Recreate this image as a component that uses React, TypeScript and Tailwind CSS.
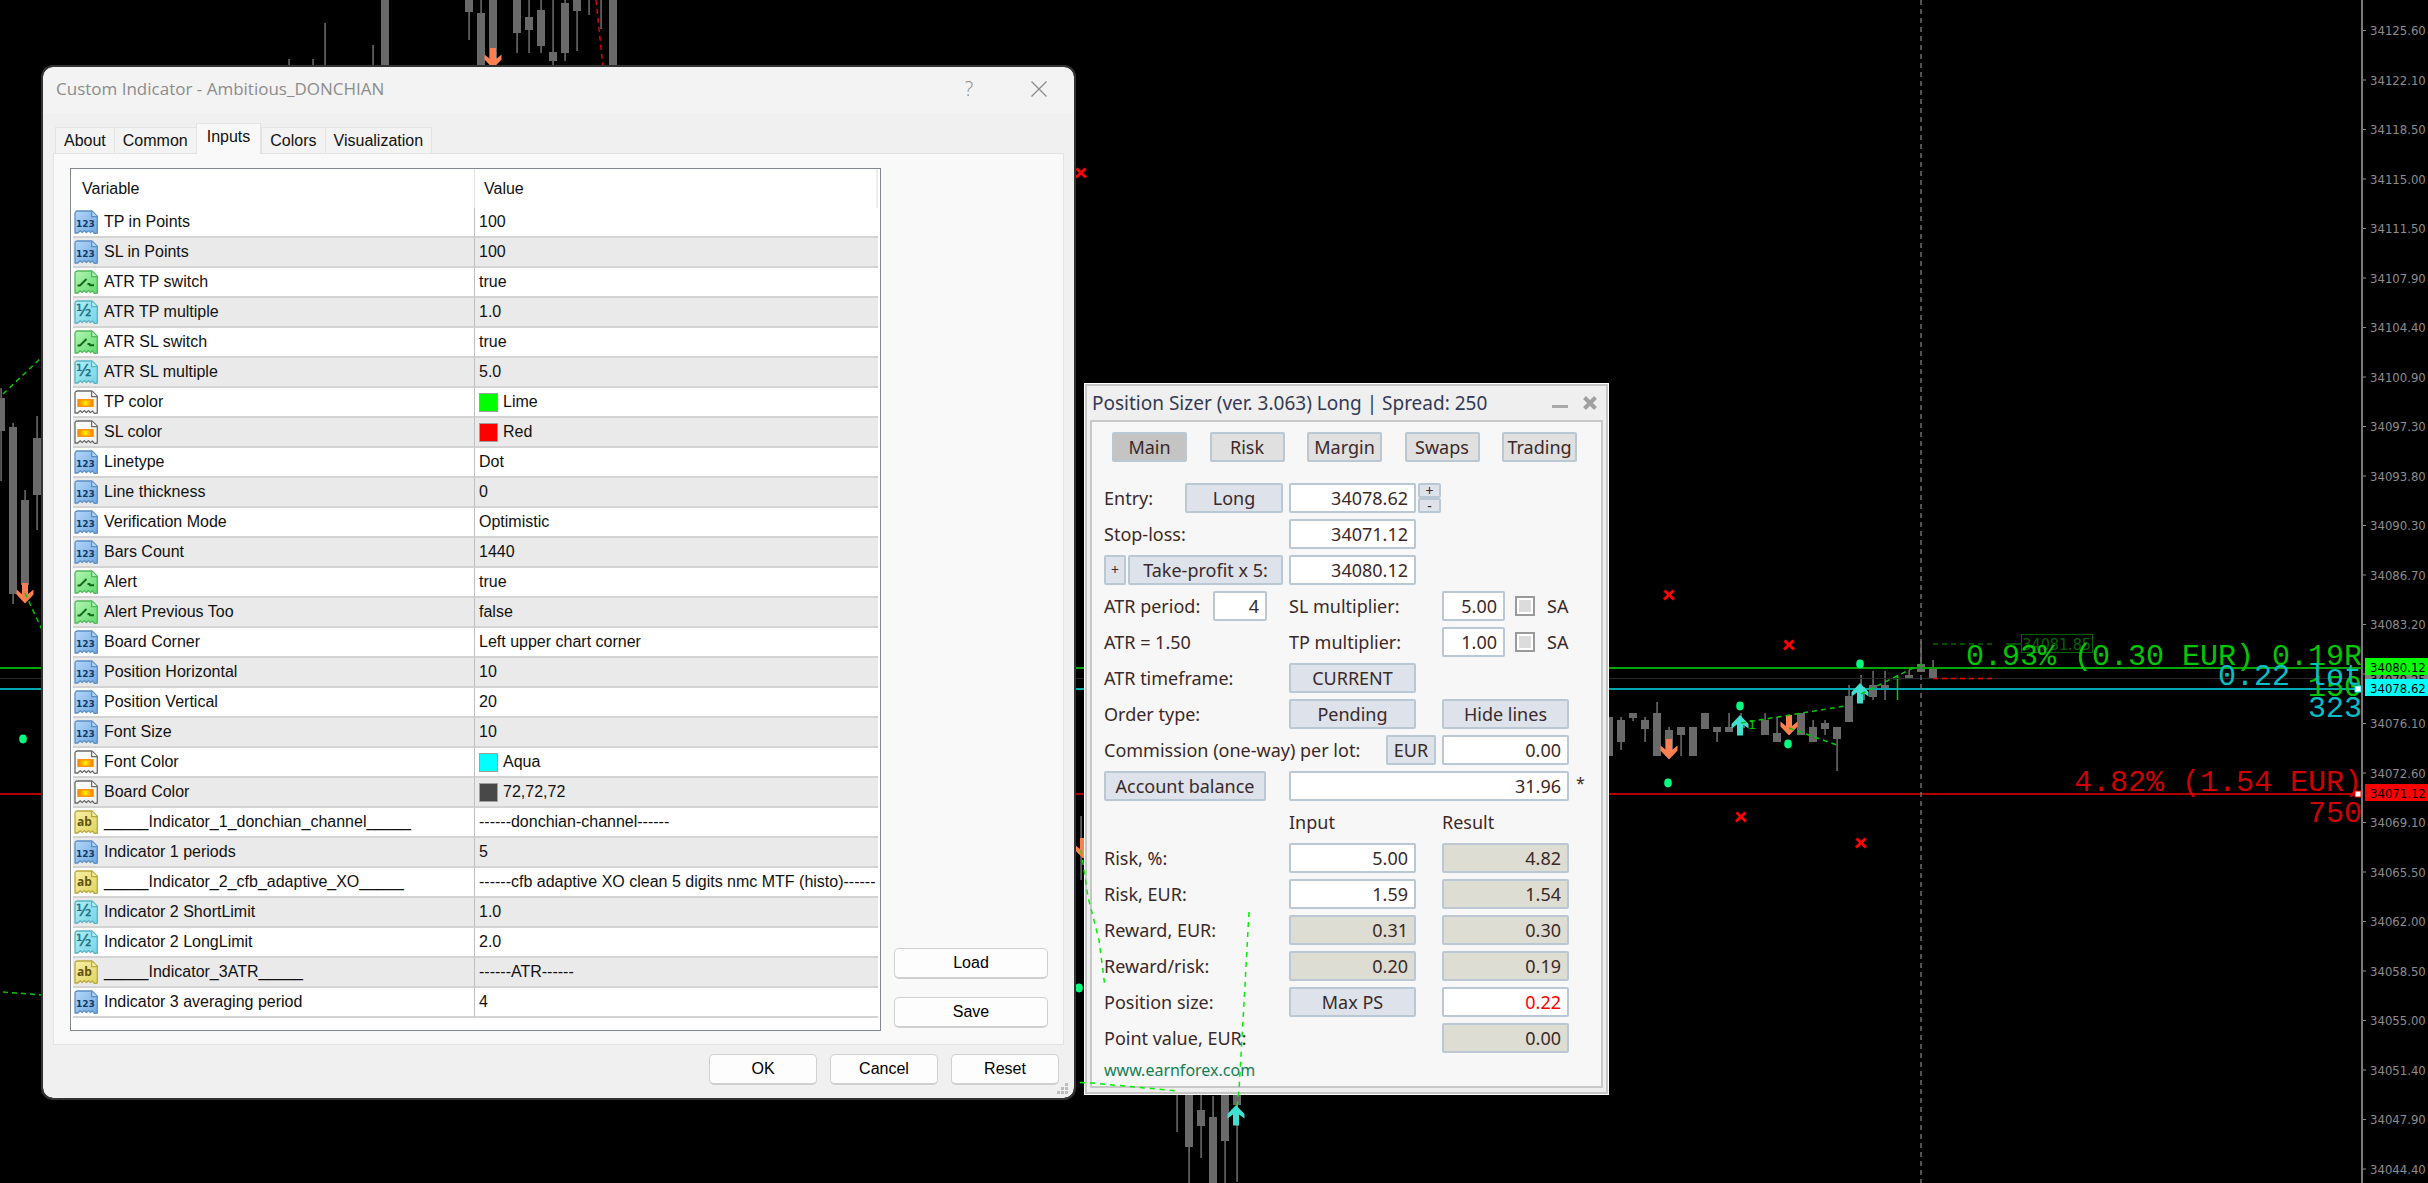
import React from "react";

type Kind = "int" | "bool" | "real" | "color" | "string";

interface Variable {
  name: string;
  value: string;
  kind: Kind;
  swatch?: string;
}

const variables: Variable[] = [
  { name: "TP in Points", value: "100", kind: "int" },
  { name: "SL in Points", value: "100", kind: "int" },
  { name: "ATR TP switch", value: "true", kind: "bool" },
  { name: "ATR TP multiple", value: "1.0", kind: "real" },
  { name: "ATR SL switch", value: "true", kind: "bool" },
  { name: "ATR SL multiple", value: "5.0", kind: "real" },
  { name: "TP color", value: "Lime", kind: "color", swatch: "bg-[#00ff00]" },
  { name: "SL color", value: "Red", kind: "color", swatch: "bg-[#ff0000]" },
  { name: "Linetype", value: "Dot", kind: "int" },
  { name: "Line thickness", value: "0", kind: "int" },
  { name: "Verification Mode", value: "Optimistic", kind: "int" },
  { name: "Bars Count", value: "1440", kind: "int" },
  { name: "Alert", value: "true", kind: "bool" },
  { name: "Alert Previous Too", value: "false", kind: "bool" },
  { name: "Board Corner", value: "Left upper chart corner", kind: "int" },
  { name: "Position Horizontal", value: "10", kind: "int" },
  { name: "Position Vertical", value: "20", kind: "int" },
  { name: "Font Size", value: "10", kind: "int" },
  { name: "Font Color", value: "Aqua", kind: "color", swatch: "bg-[#00ffff]" },
  { name: "Board Color", value: "72,72,72", kind: "color", swatch: "bg-[#484848]" },
  { name: "_____Indicator_1_donchian_channel_____", value: "------donchian-channel------", kind: "string" },
  { name: "Indicator 1 periods", value: "5", kind: "int" },
  { name: "_____Indicator_2_cfb_adaptive_XO_____", value: "------cfb adaptive XO clean 5 digits nmc MTF (histo)------", kind: "string" },
  { name: "Indicator 2 ShortLimit", value: "1.0", kind: "real" },
  { name: "Indicator 2 LongLimit", value: "2.0", kind: "real" },
  { name: "_____Indicator_3ATR_____", value: "------ATR------", kind: "string" },
  { name: "Indicator 3 averaging period", value: "4", kind: "int" },
];

// fill top, fill bottom, outline, ink
const iconColors: Record<Kind, [string, string, string, string]> = {
  int: ["#b4d6fa", "#6fa8e0", "#5b8fc4", "#123a66"],
  bool: ["#b2f7b4", "#62d86c", "#4fb85a", "#14641c"],
  real: ["#b4f0f8", "#74d3e4", "#57b3c4", "#1c6f80"],
  color: ["#ffffff", "#f1f1f1", "#6a6a6a", "#ff8a00"],
  string: ["#f7f0a8", "#e2d35c", "#b8a83c", "#5e5410"],
};

const TypeIcon: React.FC<{ kind: Kind }> = ({ kind }) => {
  const [top, bottom, line, ink] = iconColors[kind];
  return (
    <svg width="24" height="24" viewBox="0 0 24 24" className="shrink-0" aria-hidden="true">
      <defs>
        <linearGradient id={`fill-${kind}`} x1="0" y1="0" x2="1" y2="1">
          <stop offset="0" stopColor={top} />
          <stop offset="1" stopColor={bottom} />
        </linearGradient>
        <linearGradient id="chip">
          <stop offset="0" stopColor="#ff7a00" />
          <stop offset="0.5" stopColor="#ffee00" />
          <stop offset="1" stopColor="#ff7a00" />
        </linearGradient>
      </defs>
      <path
        d="M1 23V3.5Q1 1 3.5 1H18L23.3 6.3V23L20.6 23.6L18.4 21L16.4 22.6L14.6 20.6L12.4 22.6L10.2 20.6L8.2 22.6L6.2 20.8L3.8 23Z"
        fill={`url(#fill-${kind})`}
        stroke={line}
        strokeWidth="1.3"
        strokeLinejoin="round"
      />
      <path d="M17.6 1.2V6.6H23" fill={top} stroke={line} strokeWidth="1.3" />
      {kind === "int" && (
        <text x="11.4" y="16.6" textAnchor="middle" fontSize="9" fontWeight="700" fontFamily="DejaVu Sans, sans-serif" fill={ink}>123</text>
      )}
      {kind === "real" && (
        <text x="9.8" y="15.8" textAnchor="middle" fontSize="16" fontFamily="DejaVu Sans, sans-serif" fill={ink} stroke={ink} strokeWidth="0.4">½</text>
      )}
      {kind === "string" && (
        <text x="10.4" y="16.4" textAnchor="middle" fontSize="12" fontWeight="700" fontFamily="Open Sans, sans-serif" fill={ink}>ab</text>
      )}
      {kind === "bool" && <path d="M3.5 15.5H6L12.5 9M13.5 14H15.5L16 15.3H20" fill="none" stroke={ink} strokeWidth="1.9" />}
      {kind === "color" && <rect x="4" y="9.8" width="15" height="6.4" fill="url(#chip)" stroke={ink} strokeWidth="1.4" />}
    </svg>
  );
};

// [center x, wick top, wick bottom, body top, body bottom]
const candles: number[][] = [
  [1, 388, 481, 398, 431], [13, 423, 604, 427, 594], [25, 490, 585, 500, 585], [37, 416, 530, 438, 495],
  [289, 59, 70, 0, 0], [313, 59, 70, 0, 0], [325, 23, 70, 0, 0], [373, 45, 70, 65, 70], [385, 0, 70, 0, 70],
  [469, 0, 40, 0, 12], [481, 0, 70, 13, 70], [493, 0, 60, 0, 60], [517, 0, 53, 0, 33], [529, 0, 53, 17, 30],
  [541, 0, 53, 10, 46], [553, 0, 70, 52, 61], [565, 0, 61, 3, 53], [577, 0, 51, 0, 11], [589, 0, 15, 0, 0],
  [601, 0, 29, 0, 0], [613, 0, 70, 0, 70],
  [1081, 816, 880, 0, 0], [1177, 1090, 1132, 0, 0], [1189, 1090, 1183, 1090, 1147], [1201, 1090, 1158, 1110, 1126],
  [1213, 1096, 1183, 1117, 1183], [1225, 1090, 1183, 1090, 1141], [1237, 1090, 1182, 1090, 1105],
  [1609, 717, 756, 717, 756], [1621, 717, 750, 720, 742], [1633, 713, 721, 713, 718], [1645, 717, 742, 720, 729],
  [1657, 702, 756, 713, 756], [1669, 727, 750, 730, 756], [1681, 727, 756, 727, 735], [1693, 727, 756, 727, 756],
  [1705, 713, 729, 713, 729], [1717, 727, 742, 727, 732], [1729, 713, 732, 727, 732], [1741, 713, 728, 720, 728],
  [1765, 713, 735, 720, 735], [1777, 717, 742, 733, 742], [1801, 713, 735, 713, 735], [1813, 720, 742, 727, 742],
  [1825, 720, 735, 723, 729], [1837, 727, 771, 727, 739], [1849, 685, 722, 696, 722], [1861, 675, 700, 687, 700],
  [1873, 671, 700, 685, 697], [1885, 671, 700, 685, 689], [1909, 670, 679, 675, 679], [1921, 641, 672, 664, 672],
  [1933, 660, 679, 668, 679],
];

const crosses = [[1081, 173], [1669, 595], [1789, 645], [1741, 817], [1861, 843], [60, 1095]];
const dots = [[1860, 664], [1740, 706], [1788, 744], [1668, 783], [23, 739], [1079, 988]];
const upArrows = [[1740, 715], [1860, 683]];
const downArrows = [[1669, 739], [1789, 715], [25, 583], [493, 48], [1083, 838]];

const prices = [
  "34125.60", "34122.10", "34118.50", "34115.00", "34111.50", "34107.90", "34104.40", "34100.90",
  "34097.30", "34093.80", "34090.30", "34086.70", "34083.20", "34079.70", "34076.10", "34072.60",
  "34069.10", "34065.50", "34062.00", "34058.50", "34055.00", "34051.40", "34047.90", "34044.40",
];

const UpArrow: React.FC<{ x: number; y: number }> = ({ x, y }) => (
  <path transform={`translate(${x} ${y})`} d="M0 0L8.5 9V13.5L3 9.5V20.5H-3V9.5L-8.5 13.5V9Z" fill="#40e0d0" />
);

const DownArrow: React.FC<{ x: number; y: number }> = ({ x, y }) => (
  <path transform={`translate(${x} ${y})`} d="M0 20.5L8.5 11.5V6.5L3 11V0H-3V11L-8.5 6.5V11.5Z" fill="#ff7f50" />
);

const Chart: React.FC = () => (
  <svg className="absolute inset-0 h-full w-full" aria-label="Price chart">
    {/* Candles */}
    {candles.map(([x, wt, wb, bt, bb]) => (
      <g key={`${x}-${wt}`} fill="#696969">
        <rect x={x - 0.7} y={wt} width="1.6" height={wb - wt} />
        <rect x={x - 4} y={bt} width="8" height={bb - bt} />
      </g>
    ))}
    <path d="M1897.5 675V700M1893 678.5H1901" stroke="#00d000" strokeWidth="1.5" />

    {/* Price levels */}
    <line x1="0" x2="2362" y1="678.5" y2="678.5" stroke="#2a2a2a" />
    <line x1="0" x2="2362" y1="668" y2="668" stroke="#00a800" strokeWidth="2" />
    <line x1="0" x2="2362" y1="689" y2="689" stroke="#00a8b0" strokeWidth="2" />
    <line x1="0" x2="2362" y1="794" y2="794" stroke="#b00000" strokeWidth="2" />
    <line x1="1921" x2="1921" y1="0" y2="100%" stroke="#6e6e6e" strokeWidth="1.5" strokeDasharray="5 4" />

    {/* Trade marks */}
    {upArrows.map(([x, y]) => <UpArrow key={x} x={x} y={y} />)}
    {downArrows.map(([x, y]) => <DownArrow key={x} x={x} y={y} />)}
    {dots.map(([x, y]) => <ellipse key={x} cx={x} cy={y} rx="3.8" ry="4.4" fill="#00ff7f" />)}
    {crosses.map(([x, y]) => (
      <path key={x} transform={`translate(${x} ${y})`} d="M-4.5 -4.5L5 4.5M4.5 -4.5L-5 4.5" stroke="#ff0000" strokeWidth="3" />
    ))}
    <g fill="none" stroke="#00c800" strokeWidth="1.5" strokeDasharray="5 4">
      <path d="M3 394L43 356M25 593L43 632M3 992L43 995" />
      <path d="M1741 723L1845 706M1789 728L1837 745M1861 694L1921 664" />
      <path d="M596 0L603 67" stroke="#e00000" />
      <path d="M1933 678.5H1992" stroke="#ff0000" />
      <path d="M1933 644H1992" stroke="#006400" />
      <path d="M2006 644H2021" stroke="#006400" strokeDasharray="none" />
    </g>
    <text x="1748" y="729" fontSize="13" fontFamily="DejaVu Sans, sans-serif" fill="#00c800">1</text>

    {/* Level labels */}
    <g fontFamily="Liberation Mono, monospace" fontSize="30" textAnchor="end">
      <rect x="2021.5" y="634.5" width="71" height="18" fill="none" stroke="#006400" />
      <text x="2091" y="650" fontSize="16" fontFamily="DejaVu Sans Condensed, sans-serif" fill="#006400">34081.85</text>
      <text x="2362" y="665" fill="#00c800">0.93% (0.30 EUR) 0.19R</text>
      <text x="2362" y="696" fill="#00c800">150</text>
      <text x="2362" y="685" fill="#00c0c8">0.22 lot</text>
      <text x="2362" y="717" fill="#00c0c8">323</text>
      <text x="2362" y="791" fill="#d00000">4.82% (1.54 EUR)</text>
      <text x="2362" y="822" fill="#d00000">750</text>
    </g>
    <rect x="2355" y="686" width="6" height="6" fill="#fff" stroke="#00ffff" />
    <rect x="2355" y="791" width="6" height="6" fill="#fff" stroke="#ff0000" />

    {/* Price scale */}
    <rect x="2361" width="2" height="100%" fill="#787878" />
    <g fontFamily="DejaVu Sans Condensed, sans-serif" fontSize="13" fill="#8c8c8c">
      {prices.map((p, i) => (
        <g key={p} transform={`translate(2363 ${30 + i * 49.5})`}>
          <rect width="3" height="1" />
          <text x="7" y="5">{p}</text>
        </g>
      ))}
      <rect x="2365" y="672" width="63" height="17" fill="#808080" />
      <text x="2370" y="684" fill="#000">34079.25</text>
      <rect x="2365" y="658" width="63" height="17" fill="#00ff00" />
      <text x="2370" y="672" fill="#000">34080.12</text>
      <rect x="2365" y="679" width="63" height="17" fill="#00ffff" />
      <text x="2370" y="693" fill="#000">34078.62</text>
      <rect x="2365" y="784" width="63" height="17" fill="#ff0000" />
      <text x="2370" y="798" fill="#000">34071.12</text>
    </g>
  </svg>
);

const tabs = ["About", "Common", "Inputs", "Colors", "Visualization"];

const WinButton: React.FC<{ className: string; children: React.ReactNode }> = ({ className, children }) => (
  <button type="button" className={`h-[31px] rounded-[5px] border border-b-2 border-[#d0d0d0] bg-[#fdfdfd] text-black ${className}`}>
    {children}
  </button>
);

const IndicatorDialog: React.FC = () => (
  <section
    aria-label="Custom Indicator"
    className="absolute top-[67px] left-[43px] w-[1031px] overflow-hidden rounded-[10px] bg-[#f0f0f0] font-['Liberation_Sans',sans-serif] text-base leading-5 text-[#111] outline-2 outline-[#333]"
  >
    <header className="flex h-[46px] items-center bg-[#f3f3f3] pr-[27px] pb-[2px] pl-[13px] text-[#8c8c8c]">
      <h1 className="flex-1 font-['Open_Sans',sans-serif] text-[17px]">Custom Indicator - Ambitious_DONCHIAN</h1>
      <button type="button" aria-label="Help" className="mr-[52px] w-5 font-['Open_Sans',sans-serif] text-xl font-light">?</button>
      <button type="button" aria-label="Close" className="w-4">
        <svg width="16" height="16" viewBox="0 0 16 16" stroke="#8c8c8c" strokeWidth="1.3">
          <path d="M0.5 0.5L15.5 15.5M15.5 0.5L0.5 15.5" />
        </svg>
      </button>
    </header>

    {/* Tabs */}
    <nav className="flex h-10 items-end pl-3">
      {tabs.map((tab) => (
        <button
          key={tab}
          type="button"
          className={
            tab === "Inputs"
              ? "relative -mb-px h-[31px] border border-b-0 border-[#e3e3e3] bg-[#f9f9f9] px-[10px] pb-1"
              : "h-[26px] border border-r-0 border-b-0 border-[#e3e3e3] bg-[#f3f3f3] px-2 last:border-r"
          }
        >
          {tab}
        </button>
      ))}
    </nav>

    <div className="mx-[10px] flex gap-[13px] border border-[#e3e3e3] bg-[#f9f9f9] pt-[14px] pr-[15px] pb-[13px] pl-4">
      <div className="flex-1 border border-[#828790] bg-white px-[2px] pb-3">
        <table className="w-full border-separate border-spacing-0">
          <thead>
            <tr className="h-[39px] text-left">
              <th className="w-[402px] border-r border-[#e3e3e3] pt-0 pl-[9px] font-normal">Variable</th>
              <th className="border-r-2 border-[#eeeeee] pt-0 pl-[9px] font-normal">Value</th>
            </tr>
          </thead>
          <tbody>
            {variables.map((v) => (
              <tr key={v.name} className="h-[30px] even:bg-[#eaeaea]">
                <td className="border-r border-b-2 border-r-[#c0c0c0] border-b-[#d3d3d3] p-0">
                  <div className="flex items-center gap-[6px] pl-px">
                    <TypeIcon kind={v.kind} />
                    {v.name}
                  </div>
                </td>
                <td className="border-b-2 border-[#d3d3d3] p-0">
                  <div className="flex items-center gap-[5px] pl-1 whitespace-nowrap">
                    {v.swatch && <span className={`size-[19px] border border-[#a0a0a0] ${v.swatch}`} />}
                    {v.value}
                  </div>
                </td>
              </tr>
            ))}
          </tbody>
        </table>
      </div>
      <div className="flex w-[154px] flex-col justify-end gap-[18px] pb-[3px]">
        <WinButton className="w-full">Load</WinButton>
        <WinButton className="w-full">Save</WinButton>
      </div>
    </div>

    <footer className="flex justify-end gap-[13px] pt-[9px] pr-[15px] pb-[13px]">
      <WinButton className="w-[108px]">OK</WinButton>
      <WinButton className="w-[108px]">Cancel</WinButton>
      <WinButton className="w-[108px]">Reset</WinButton>
    </footer>
    <svg className="absolute right-[5px] bottom-[3px]" width="12" height="12" fill="#bdbdbd" aria-hidden="true">
      <path d="M8 0h3v3h-3zM8 4h3v3h-3zM4 4h3v3h-3zM8 8h3v3h-3zM4 8h3v3h-3zM0 8h3v3h-3z" />
    </svg>
  </section>
);

const Btn: React.FC<{ className: string; children: React.ReactNode }> = ({ className, children }) => (
  <button type="button" className={`rounded-[2px] border-2 border-[#b9c8d3] bg-[#dde2eb] text-center whitespace-nowrap ${className}`}>
    {children}
  </button>
);

interface FieldProps {
  id: string;
  value: string;
  label?: string;
  className?: string;
  readOnly?: boolean;
}

const Field: React.FC<FieldProps> = ({ id, value, label, className = "w-[127px]", readOnly }) => (
  <input
    id={id}
    aria-label={label}
    defaultValue={value}
    readOnly={readOnly}
    className={`h-[30px] rounded-[2px] border-2 border-[#b9c8d3] px-[6px] text-right ${readOnly ? "bg-[#ddddd3]" : "bg-white"} ${className}`}
  />
);

const Row: React.FC<{ children: React.ReactNode }> = ({ children }) => (
  <div className="grid h-[30px] grid-cols-[185px_153px_1fr] items-center">{children}</div>
);

const PositionSizer: React.FC = () => (
  <section
    aria-label="Position Sizer"
    className="absolute top-[383px] left-[1084px] w-[525px] border border-white bg-[#c6c6c6] p-[2px] font-['Noto_Sans',sans-serif] text-lg leading-6 text-[#3b2928]"
  >
    <div className="bg-[#efefef] px-[3px] pb-1">
      <header className="flex h-[34px] items-center pr-[6px] pl-[2px] text-[#333a55]">
        <h2 className="flex-1 text-[19px]">Position Sizer (ver. 3.063) Long | Spread: 250</h2>
        <button type="button" aria-label="Minimize" className="mr-[15px]">
          <svg width="16" height="14" fill="#a9a9a9"><rect y="9" width="16" height="3" /></svg>
        </button>
        <button type="button" aria-label="Close">
          <svg width="14" height="14" stroke="#a0a0a0" strokeWidth="4"><path d="M1.5 1.5L12.5 12.5M12.5 1.5L1.5 12.5" /></svg>
        </button>
      </header>

      <div className="border-2 border-[#c8c8c8] bg-[#f7f7f7] px-3 pt-[10px] pb-1">
        <nav className="mr-3 mb-[21px] ml-2 flex justify-between">
          {["Main", "Risk", "Margin", "Swaps", "Trading"].map((tab) => (
            <button
              key={tab}
              type="button"
              className={`h-[30px] w-[75px] rounded-[2px] border-2 border-[#b9c8d3] ${tab === "Main" ? "bg-[#c4c4c4]" : "bg-[#e0e0e0]"}`}
            >
              {tab}
            </button>
          ))}
        </nav>

        <div className="flex flex-col gap-[6px]">
          <Row>
            <div className="flex items-center justify-between pr-[6px]">
              <label htmlFor="entry">Entry:</label>
              <Btn className="h-[30px] w-[98px]">Long</Btn>
            </div>
            <div className="flex gap-[2px]">
              <Field id="entry" value="34078.62" />
              <div className="flex flex-col text-sm leading-[11px]">
                <Btn className="h-[15px] w-[23px]">+</Btn>
                <Btn className="h-[15px] w-[23px]">-</Btn>
              </div>
            </div>
          </Row>
          <Row>
            <label htmlFor="stop">Stop-loss:</label>
            <Field id="stop" value="34071.12" />
          </Row>
          <Row>
            <div className="flex gap-[2px]">
              <Btn className="h-[30px] w-[22px] text-sm">+</Btn>
              <Btn className="h-[30px] w-[155px]">Take-profit x 5:</Btn>
            </div>
            <Field id="take" label="Take-profit" value="34080.12" />
          </Row>
          <Row>
            <div className="flex items-center justify-between pr-[22px] whitespace-nowrap">
              <label htmlFor="atr">ATR period:</label>
              <Field id="atr" value="4" className="w-[54px]" />
            </div>
            <label htmlFor="slm">SL multiplier:</label>
            <div className="flex items-center">
              <Field id="slm" value="5.00" className="w-[63px]" />
              <input id="sa1" type="checkbox" className="mr-3 ml-[10px] size-5 appearance-none border-2 border-[#9a9a9a] bg-[#dcdcdc] shadow-[inset_0_0_0_2px_#fff]" />
              <label htmlFor="sa1">SA</label>
            </div>
          </Row>
          <Row>
            <span>ATR = 1.50</span>
            <label htmlFor="tpm">TP multiplier:</label>
            <div className="flex items-center">
              <Field id="tpm" value="1.00" className="w-[63px]" />
              <input id="sa2" type="checkbox" className="mr-3 ml-[10px] size-5 appearance-none border-2 border-[#9a9a9a] bg-[#dcdcdc] shadow-[inset_0_0_0_2px_#fff]" />
              <label htmlFor="sa2">SA</label>
            </div>
          </Row>
          <Row>
            <span>ATR timeframe:</span>
            <Btn className="h-[30px] w-[127px]">CURRENT</Btn>
          </Row>
          <Row>
            <span>Order type:</span>
            <Btn className="h-[30px] w-[127px]">Pending</Btn>
            <Btn className="h-[30px] w-[127px]">Hide lines</Btn>
          </Row>
          <Row>
            <div className="col-span-2 flex items-center justify-between pr-[6px]">
              <label htmlFor="commission">Commission (one-way) per lot:</label>
              <Btn className="h-[30px] w-[50px]">EUR</Btn>
            </div>
            <Field id="commission" value="0.00" />
          </Row>
          <Row>
            <Btn className="h-[30px] w-[162px]">Account balance</Btn>
            <div className="col-span-2 flex gap-[7px]">
              <Field id="balance" label="Account balance" value="31.96" className="w-[280px]" />
              <span className="text-base">*</span>
            </div>
          </Row>
          <Row>
            <span />
            <span>Input</span>
            <span>Result</span>
          </Row>
          <Row>
            <label htmlFor="risk">Risk, %:</label>
            <Field id="risk" value="5.00" />
            <Field id="risk-result" label="Risk, % result" value="4.82" readOnly />
          </Row>
          <Row>
            <label htmlFor="risk-eur">Risk, EUR:</label>
            <Field id="risk-eur" value="1.59" />
            <Field id="risk-eur-result" label="Risk, EUR result" value="1.54" readOnly />
          </Row>
          <Row>
            <label htmlFor="reward">Reward, EUR:</label>
            <Field id="reward" value="0.31" readOnly />
            <Field id="reward-result" label="Reward, EUR result" value="0.30" readOnly />
          </Row>
          <Row>
            <label htmlFor="ratio">Reward/risk:</label>
            <Field id="ratio" value="0.20" readOnly />
            <Field id="ratio-result" label="Reward/risk result" value="0.19" readOnly />
          </Row>
          <Row>
            <label htmlFor="size">Position size:</label>
            <Btn className="h-[30px] w-[127px]">Max PS</Btn>
            <Field id="size" value="0.22" className="w-[127px] text-[#ff0000]" />
          </Row>
          <Row>
            <label htmlFor="point" className="col-span-2">Point value, EUR:</label>
            <Field id="point" value="0.00" readOnly />
          </Row>
        </div>
        <a href="#earnforex" className="mt-[5px] block text-base text-[#138053]">www.earnforex.com</a>
      </div>
    </div>
  </section>
);

const App: React.FC = () => {
  return (
    <main className="relative h-screen min-h-[1120px] overflow-hidden bg-black">
      <Chart />
      <PositionSizer />

      {/* Trade lines stay above the panel */}
      <svg className="pointer-events-none absolute inset-0 h-full w-full" aria-hidden="true">
        <g fill="none" stroke="#00f000" strokeWidth="1.5" strokeDasharray="5 5">
          <path d="M1081 850L1088 897L1099 940L1105 987" />
          <path d="M1249 912L1244 1003L1239 1090L1237 1107" />
          <path d="M1070 1082L1092 1083L1178 1091" />
        </g>
        <UpArrow x={1236} y={1105} />
      </svg>

      <IndicatorDialog />
    </main>
  );
};

export default App;
